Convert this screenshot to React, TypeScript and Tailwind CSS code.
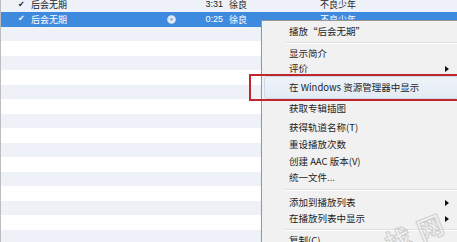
import React from 'react'

const FONT = "font-['Noto_Sans_CJK_SC',sans-serif]"

const ROWS = Array.from({ length: 17 }, (_, i) => i)

type MenuItem =
  | { kind: 'sep'; h: string }
  | { kind: 'item'; label: string; h: string; sub?: boolean; hot?: boolean }

const MENU: MenuItem[] = [
  { kind: 'item', label: '播放“后会无期”', h: 'h-[15px]' },
  { kind: 'sep', h: 'h-[7px]' },
  { kind: 'item', label: '显示简介', h: 'h-[15px]' },
  { kind: 'item', label: '评价', h: 'h-[15px]', sub: true },
  { kind: 'item', label: '在 Windows 资源管理器中显示', h: 'h-[23px]', hot: true },
  { kind: 'item', label: '获取专辑插图', h: 'h-[20px]' },
  { kind: 'item', label: '获得轨道名称(T)', h: 'h-[17px]' },
  { kind: 'item', label: '重设播放次数', h: 'h-[17px]' },
  { kind: 'item', label: '创建 AAC 版本(V)', h: 'h-[17px]' },
  { kind: 'item', label: '统一文件...', h: 'h-[16px]' },
  { kind: 'sep', h: 'h-[8px]' },
  { kind: 'item', label: '添加到播放列表', h: 'h-[17px]', sub: true },
  { kind: 'item', label: '在播放列表中显示', h: 'h-[16px]', sub: true },
  { kind: 'sep', h: 'h-[6px]' },
  { kind: 'item', label: '复制(C)', h: 'h-[16px]' },
]

function Row({ i }: { i: number }) {
  const selected = i === 1
  const striped = i % 2 === 0
  const bg = selected ? 'bg-[#3d8ade]' : striped ? 'bg-[#eef2f8]' : 'bg-white'
  const text = selected ? 'text-white' : 'text-[#222]'

  if (i > 1) return <div className={`h-[14.5px] shrink-0 ${bg}`} />

  return (
    <div className={`flex h-[14.5px] shrink-0 items-center text-[9px] leading-none ${bg} ${text}`}>
      <span className={`w-[13px] pl-[17px] box-content font-['DejaVu_Sans',sans-serif] text-[8px] ${selected ? 'text-white' : 'text-[#222]'}`}>
        ✔
      </span>
      <span className="w-[136px]">后会无期</span>
      <span className="flex w-[12px] items-center">
        {selected && (
          <svg width="9" height="9" viewBox="0 0 9 9">
            <circle cx="4.5" cy="4.5" r="4.3" fill="#dfe9f6" />
            <path d="M2.8 3.8 L6.2 3.8 L4.5 5.6 Z" fill="#3d8ade" />
          </svg>
        )}
      </span>
      <span className="w-[44px] text-right font-['Liberation_Sans',sans-serif]">{selected ? '0:25' : '3:31'}</span>
      <span className="w-[97px] pl-[6px]">徐良</span>
      <span>不良少年</span>
    </div>
  )
}

export default function App() {
  return (
    <div className={`relative h-[242px] w-[457px] overflow-hidden bg-white ${FONT}`}>
      <div className="mt-[-2.5px] flex flex-col border-l border-[#bdbdbd]">
        {ROWS.map((i) => (
          <Row key={i} i={i} />
        ))}
      </div>

      {/* context menu */}
      <div className="absolute left-[261px] top-[20px] h-[240px] w-[200px] border border-[#979797] bg-[#f1f1f1] pt-[3px] shadow-[2px_2px_3px_rgba(0,0,0,0.3)]">
        {MENU.map((m, idx) =>
          m.kind === 'sep' ? (
            <div key={idx} className={`flex items-center pl-[23px] ${m.h}`}>
              <div className="h-[2px] w-full border-t border-b border-t-[#e0e0e0] border-b-white" />
            </div>
          ) : (
            <div
              key={idx}
              className={`mx-[2px] flex items-center justify-between pl-[24px] pr-[8px] text-[9.5px] leading-none text-[#1e1e1e] ${m.h} ${
                m.hot ? 'rounded-[3px] border border-[#c9d8ea] bg-gradient-to-b from-[#eef3f9] to-[#e3ebf4]' : 'border border-transparent'
              }`}
            >
              <span>{m.label}</span>
              {m.sub && (
                <svg width="4" height="6" viewBox="0 0 4 6">
                  <path d="M0 0 L4 3 L0 6 Z" fill="#111" />
                </svg>
              )}
            </div>
          )
        )}
      </div>

      {/* red highlight box */}
      <div className="absolute left-[249px] top-[74px] h-[27px] w-[215px] border-2 border-[#c1262c]" />

      {/* watermark */}
      <div className="absolute left-[384px] top-[220px] flex rotate-[-22deg] gap-[8px] text-[26px] font-bold leading-none text-transparent [-webkit-text-stroke:1px_#cdcdcd]">
        <span>找</span>
        <span>网</span>
      </div>
    </div>
  )
}
